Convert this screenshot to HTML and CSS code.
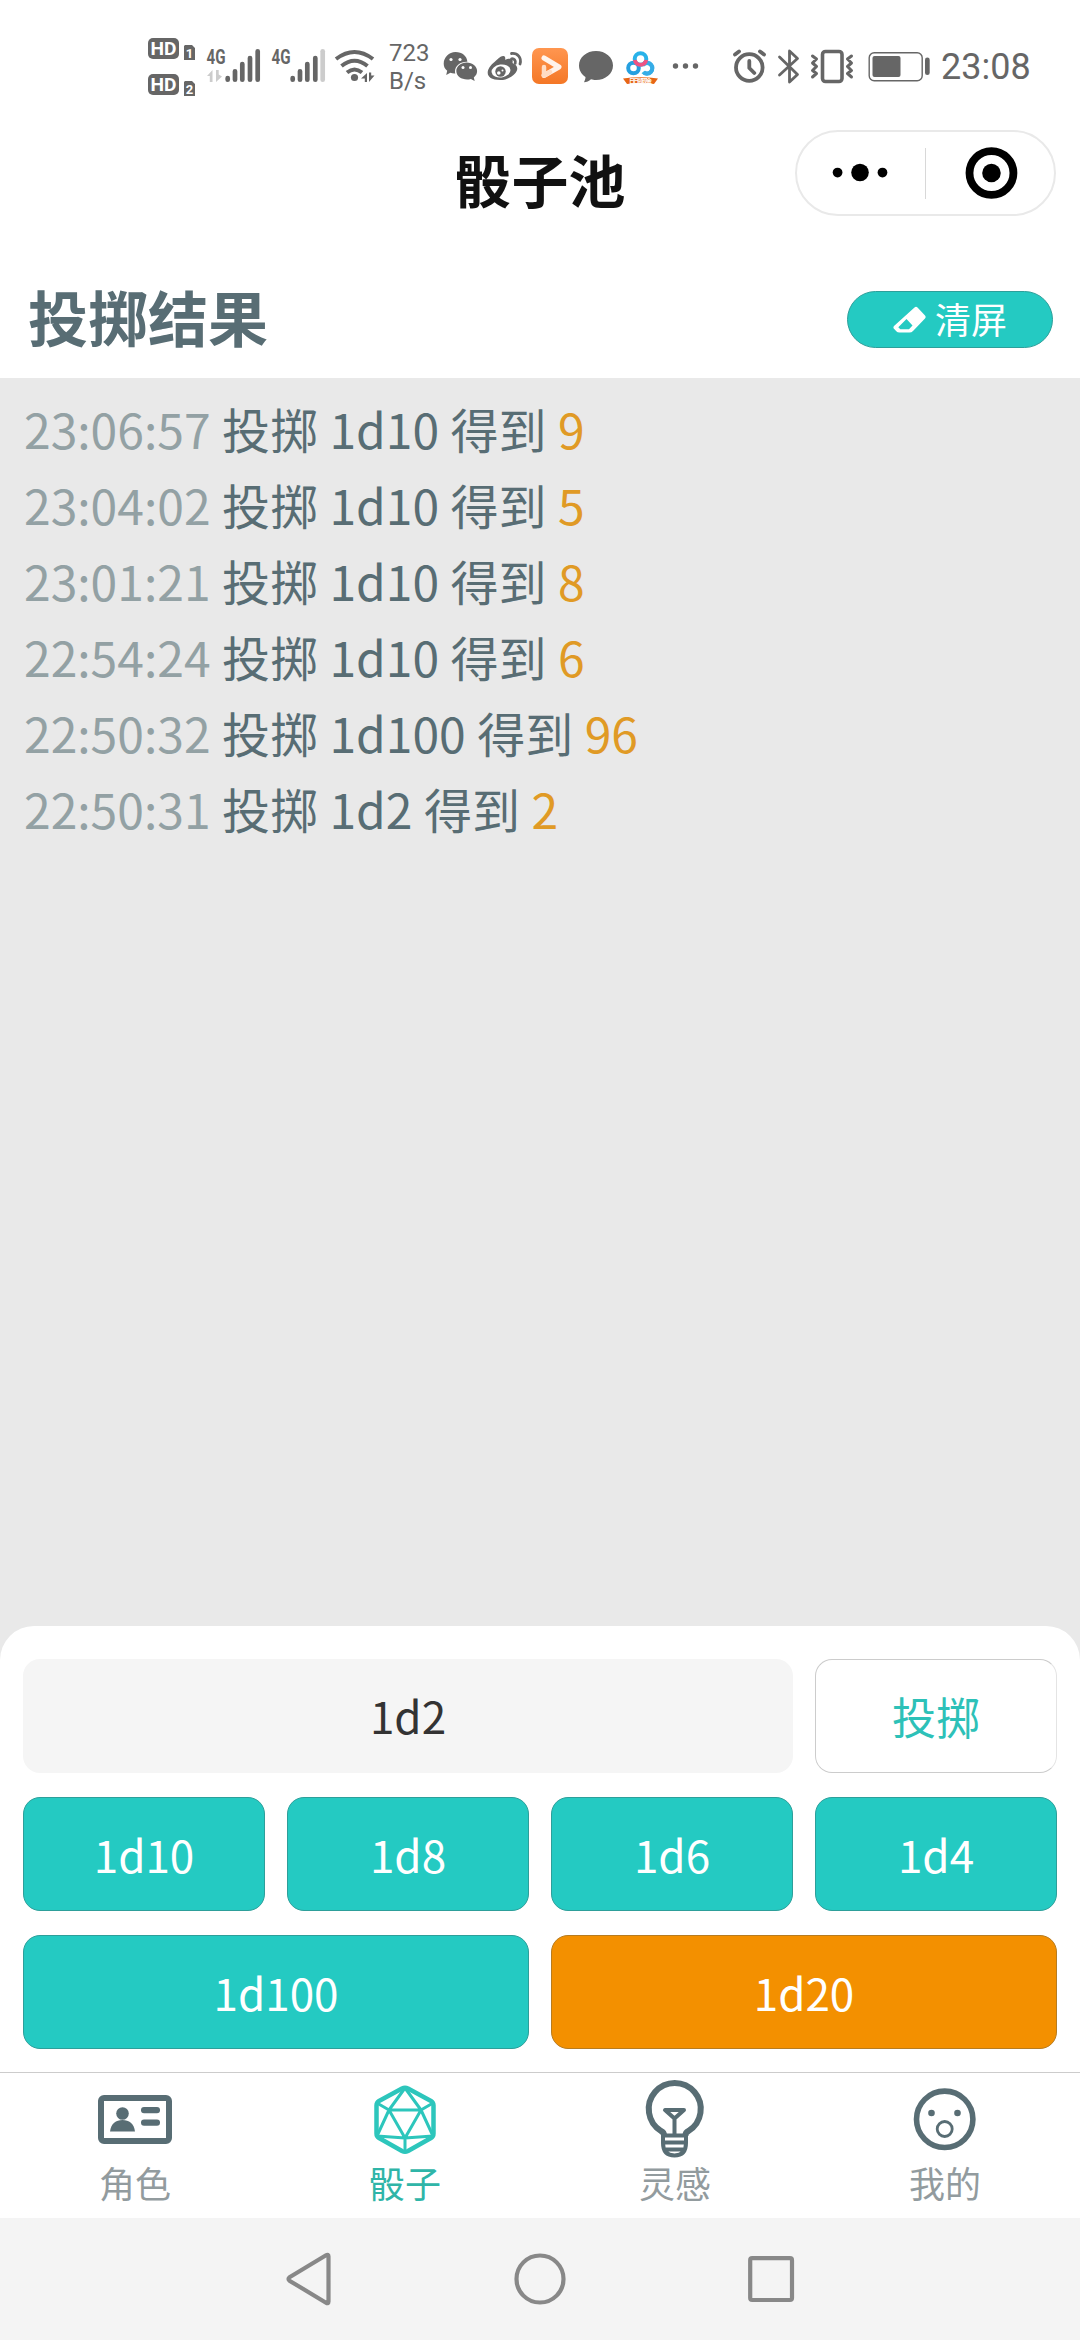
FILE: index.html
```html
<!DOCTYPE html>
<html lang="zh-CN">
<head>
<meta charset="utf-8">
<title>骰子池</title>
<link rel="stylesheet" href="styles.css">
</head>
<body>
<div class="screen">
  <div class="status">
    <svg width="53" height="60" viewBox="148 37 53 60">
      <g fill="#666"><rect x="148" y="38" width="31" height="21" rx="5"/><rect x="148" y="74" width="31" height="21" rx="5"/>
      <path d="M185 45h7l3 3v12h-11V46zM185 81h7l3 3v12h-11V82z"/></g>
      <g class="tiny" fill="#fff" text-anchor="middle"><text x="163.5" y="55" font-size="19" textLength="26" lengthAdjust="spacingAndGlyphs">HD</text><text x="163.5" y="91" font-size="19" textLength="26" lengthAdjust="spacingAndGlyphs">HD</text><text x="189.5" y="57.500" font-size="13">1</text><text x="189.500" y="93.500" font-size="13">2</text></g>
    </svg>
    <svg width="65" height="60" viewBox="201 37 65 60">
      <text class="tiny" x="206.500" y="64" font-size="20" textLength="19" lengthAdjust="spacingAndGlyphs" fill="#666">4G</text>
      <path d="M212.500 70v12h-2.700v-6H207zM216 82V70h2.700v4.500l3.300 2z" fill="#ccc"/>
      <path class="bars" d="M227.700 78v1.700M235 71.300v8.400M242.300 64v15.700M250 58v21.700M257.700 51.300v28.400"/>
    </svg>
    <svg width="64" height="60" viewBox="266 37 64 60">
      <text class="tiny" x="271.500" y="64" font-size="20" textLength="19" lengthAdjust="spacingAndGlyphs" fill="#666">4G</text>
      <path class="bars" d="M292.700 78v1.700M300 71.300v8.400M307.300 64v15.700M315.300 58v21.700"/>
      <path class="bars faint" d="M322.700 51.300v28.400"/>
    </svg>
    <svg width="55" height="60" viewBox="330 37 55 60">
      <g fill="none" stroke="#666" stroke-width="4"><path d="M336 59q18.500-14 37 0M341.500 66q13-10.500 26 0M347 72.500q7.500-6 15 0"/></g>
      <circle cx="354.500" cy="77.500" r="3.600" fill="#666"/>
      <path d="M367 73v9h-2.200v-3.500H361zM369 82v-9.500h2.200v3h3.300z" fill="#666"/>
    </svg>
    <div class="speed"><span>723</span><span>B/s</span></div>
    <svg width="47" height="60" viewBox="436 37 47 60">
      <path fill="#666" d="M455.500 52c6.700 0 11.500 4.200 11.900 9.700-6.700-.3-12.400 4-12.400 9.700 0 .8.100 1.300.3 2-1.800.1-3.200 0-4.900-.6l-4.200 2.200 1-4.200c-2.300-1.900-3.500-4.200-3.500-7.100 0-6.500 5.300-11.700 11.800-11.700z"/>
      <path fill="#666" d="M466.700 62.500c5.700 0 10.400 3.800 10.400 8.600 0 2.800-1.300 4.800-3.300 6.400l.9 3.500-3.800-2c-6.700 2-14.600-1.600-14.600-7.900 0-4.800 4.700-8.600 10.400-8.600z"/>
      <g fill="#fff"><circle cx="451" cy="59.500" r="1.600"/><circle cx="460" cy="59.500" r="1.600"/><circle cx="463" cy="67.500" r="1.500"/><circle cx="470.500" cy="67.500" r="1.500"/></g>
    </svg>
    <svg width="44" height="60" viewBox="483 37 44 60">
      <path fill="#666" d="M499 58c3-2 6-2 5.500 2 6-2.500 9-1 8 3 12 5-1 17-12 17-17 0-15-11-6-18 3-3 6.500-6.500 9-6 2 .4 2 2 1.500 4z"/>
      <ellipse cx="501" cy="71" rx="9.500" ry="6.500" fill="#fff" transform="rotate(-8 501 71)"/>
      <circle cx="500.500" cy="71.500" r="5.200" fill="#666"/><circle cx="498.800" cy="73" r="1.800" fill="#fff"/><circle cx="502.500" cy="70.500" r="1" fill="#fff"/>
      <g fill="none" stroke="#666" stroke-width="2.800" stroke-linecap="round"><path d="M511.500 53.500c6-.8 10.500 4.500 8.500 10.500M511.500 58.800c2.800-.3 4.500 1.700 3.700 4.500"/></g>
    </svg>
    <svg width="47" height="60" viewBox="527 37 47 60">
      <defs><linearGradient id="play" x2="0" y2="1"><stop stop-color="#ff9650"/><stop offset="1" stop-color="#f47726"/></linearGradient></defs>
      <rect x="532" y="48" width="36" height="36" rx="7" fill="url(#play)"/>
      <g fill="none" stroke="#fff" stroke-width="5" stroke-linecap="round" stroke-linejoin="round"><path d="M544 58l15 9-15 8.500" opacity=".9"/><path d="M544 67v8.500l6-3.500" stroke="#ffdcc4" stroke-width="4.500"/></g>
    </svg>
    <svg width="44" height="60" viewBox="574 37 44 60"><path fill="#666" d="M596 51c9.500 0 17 6.300 17 14.500s-7.500 14.500-17 14.500c-2 0-3.500-.2-5-.7-2 2-4.500 2.900-7 2.900.7-1.700 1.500-3.200 1.500-5.200-4-2.800-6.500-6.700-6.500-11.500C579 57.300 586.500 51 596 51z"/></svg>
    <svg width="48" height="60" viewBox="618 37 48 60">
      <g fill="none" stroke-width="4"><circle cx="633.500" cy="68" r="5.300" stroke="#259fdf"/><path d="M643 72a5.300 5.300 0 1 0-.5-6.500" stroke="#36b6e7"/><path d="M644 72.500a5.400 5.400 0 1 0 0-9" stroke="#36ace7"/><circle cx="640.500" cy="59" r="5.800" stroke="#28b2e9"/><path d="M634.800 60a5.800 5.800 0 0 0 11.400 0" stroke="#ee5383"/></g>
      <path d="M623 78.500q17.500-2.500 35 0l-4 5.500q-13.500-2-27 0z" fill="#e76615"/>
      <text class="tiny" x="629" y="82.500" font-size="6" textLength="23" fill="#fff">日日领现金</text>
    </svg>
    <svg width="44" height="60" viewBox="666 37 44 60"><g fill="#666"><circle cx="675.500" cy="66" r="2.700"/><circle cx="685.500" cy="66" r="2.700"/><circle cx="695.500" cy="66" r="2.700"/></g></svg>
    <svg width="62" height="60" viewBox="710 37 62 60"><g fill="none" stroke="#666" stroke-width="3.800" stroke-linecap="round" stroke-linejoin="round"><circle cx="749.300" cy="67.500" r="13.300"/><path d="M749.300 61v7l5 5M735 54.500l4-3M764 54.500l-4-3"/></g></svg>
    <svg width="33" height="60" viewBox="772 37 33 60"><path fill="none" stroke="#666" stroke-width="2.800" stroke-linejoin="round" stroke-linecap="round" d="M779.500 57l18 17.500-8 7.500V51l8 7.500-18 16.500"/></svg>
    <svg width="56" height="60" viewBox="805 37 56 60"><g fill="none" stroke="#666"><rect x="822.500" y="51.500" width="19.500" height="30" rx="3" stroke-width="3.600"/><path stroke-width="3" stroke-linecap="round" stroke-linejoin="round" d="M812.500 56l4 3-4 4 4 3.500-4 4 4 3-4 3.500M851.500 56l-4 3 4 4-4 3.500 4 4-4 3 4 3.500"/></g></svg>
    <svg width="73" height="60" viewBox="861 37 73 60"><rect x="869.200" y="52.700" width="53" height="28" rx="5" fill="none" stroke="#666" stroke-width="1.400"/><rect x="872.500" y="56" width="28" height="21" rx="2" fill="#666"/><rect x="925" y="57.500" width="4.700" height="17.500" rx="2.300" fill="#666"/></svg>
    <div class="clock">23:08</div>
  </div>

  <header class="titlebar">
    <h1 class="title">骰子池</h1>
    <div class="capsule">
      <svg class="half" viewBox="796 131 130 84"><circle cx="837" cy="172.500" r="5"/><circle cx="860" cy="172.500" r="9"/><circle cx="883" cy="172.500" r="5"/></svg>
      <span class="divider"></span>
      <svg class="half" viewBox="927 131 128 84"><circle cx="992.500" cy="173" r="22.500" fill="none" stroke="#000" stroke-width="8"/><circle cx="992.500" cy="173" r="9.500"/></svg>
    </div>
  </header>

  <section class="heading">
    <h2 class="subtitle">投掷结果</h2>
    <button class="btn clear">
      <svg width="34" height="30" viewBox="0 0 34 30"><path fill="#fff" fill-rule="evenodd" d="M21.500 2.500Q23 1 24.500 2.500L32 10.500Q33.300 12 32 13.400L20 26Q18.500 27.500 16.500 27.500H6.500Q4.500 27.500 3.300 26.200L1 23.800Q-.2 22.500 1 21zM13.500 14L5.300 22.300 7.300 24.300H16L19.500 20.500z"/></svg>
      <span>清屏</span>
    </button>
  </section>

  <main class="log">
    <p class="entry"><time>23:06:57</time> 投掷 1d10 得到 <b>9</b></p>
    <p class="entry"><time>23:04:02</time> 投掷 1d10 得到 <b>5</b></p>
    <p class="entry"><time>23:01:21</time> 投掷 1d10 得到 <b>8</b></p>
    <p class="entry"><time>22:54:24</time> 投掷 1d10 得到 <b>6</b></p>
    <p class="entry"><time>22:50:32</time> 投掷 1d100 得到 <b>96</b></p>
    <p class="entry"><time>22:50:31</time> 投掷 1d2 得到 <b>2</b></p>
  </main>

  <section class="panel">
    <div class="formula">1d2</div>
    <button class="btn roll">投掷</button>
    <button class="btn">1d10</button>
    <button class="btn">1d8</button>
    <button class="btn">1d6</button>
    <button class="btn">1d4</button>
    <button class="btn wide">1d100</button>
    <button class="btn wide orange">1d20</button>
  </section>

  <nav class="tabs">
    <div class="tab">
      <svg width="80" height="84" viewBox="95 2078 80 84"><rect x="101" y="2098" width="68" height="43" rx="3" fill="none" stroke="#586d74" stroke-width="6"/><g fill="#586d74"><circle cx="122.500" cy="2113.500" r="6.300"/><path d="M110 2131.500c1-8 6-11.500 12.500-11.500s11.500 3.500 12.500 11.500z"/><rect x="141" y="2107" width="19" height="6.300" rx="3"/><rect x="141" y="2119.500" width="19" height="6.300" rx="3"/></g></svg>
      <span>角色</span>
    </div>
    <div class="tab active">
      <svg width="80" height="84" viewBox="365 2078 80 84"><g fill="none" stroke="#2dc6bc" stroke-linejoin="round"><path stroke-width="4.500" d="M402 2088.500q3-1.500 6 0l23 12.500q2.500 1.500 2.500 4.500v28q0 3-2.500 4.500l-23 13q-3 1.500-6 0l-23-13q-2.500-1.500-2.500-4.500v-28q0-3 2.500-4.500z"/><path stroke-width="3" d="M405 2088l-16 22h32zM389 2110l16 28 16-28M377 2103l12 7-12 26 28 2 28-2-12-26 12-7M405 2138v13"/></g></svg>
      <span>骰子</span>
    </div>
    <div class="tab">
      <svg width="80" height="84" viewBox="635 2078 80 84"><g fill="none" stroke="#586d74" stroke-linejoin="round"><path stroke-width="6" d="M664 2136v-1q0-2.500-3-4a26 26 0 1 1 27.500 0q-3 1.500-3 4v1"/><path stroke-width="4" d="M663 2134v9q0 12.500 11.500 12.500t11.500-12.500v-9M664 2135.500h21M664 2142.500h21M664 2149.500h21"/><path stroke-width="4" d="M665 2110h19l-9.500 8.500zM674.500 2118.500V2135"/></g></svg>
      <span>灵感</span>
    </div>
    <div class="tab">
      <svg width="80" height="84" viewBox="905 2078 80 84"><g fill="none" stroke="#586d74"><circle cx="944.700" cy="2119.300" r="28.200" stroke-width="5.600"/><circle cx="944.700" cy="2129" r="7.500" stroke-width="2.800"/></g><g fill="#586d74"><circle cx="931.500" cy="2113" r="3.300"/><circle cx="957.500" cy="2113" r="3.300"/></g></svg>
      <span>我的</span>
    </div>
  </nav>

  <div class="sysnav">
    <svg width="50" height="58" viewBox="284 2250 50 58"><path d="M289.500 2277.300l36.500-22q2.500-1.500 2.500 1.200v45q0 2.700-2.500 1.200l-36.500-22q-2-1.700 0-3.400z"/></svg>
    <svg width="58" height="58" viewBox="511 2250 58 58"><circle cx="540" cy="2279" r="23.500"/></svg>
    <svg width="50" height="58" viewBox="744 2250 50 58"><rect x="748.200" y="2258.200" width="41.800" height="41.800" rx="2"/></svg>
  </div>
</div>
</body>
</html>
```
FILE: styles.css
```css
* { box-sizing: border-box; }
body { margin: 0; background: #fff; font-family: "Noto Sans CJK SC", sans-serif; }
svg { display: block; flex: none; }
h1, h2, p { margin: 0; }
button { font: inherit; padding: 0; }

.screen { width: 1080px; height: 2340px; display: flex; flex-direction: column; overflow: hidden; background: #e9e9e9; }

.status { height: 122px; padding: 37px 0 0 148px; display: flex; align-items: flex-start; flex: none; background: #fff; color: #666; font-family: Roboto, sans-serif; }
.tiny { font-family: Roboto, "Noto Sans CJK SC", sans-serif; font-weight: 700; }
.bars { fill: none; stroke: #666; stroke-width: 4.700px; stroke-linecap: round; }
.faint { stroke: #ccc; }
.speed { width: 51px; padding: 2px 0 0 4px; display: flex; flex-direction: column; font-size: 24px; line-height: 28px; }
.clock { font-size: 36px; line-height: 61px; padding-left: 7px; }

.titlebar { height: 134px; flex: none; display: grid; grid-template-columns: 1fr auto 1fr; padding: 8px 24px 0; background: #fff; }
.title { grid-column: 2; font-size: 57px; line-height: 97px; font-weight: 700; color: #111; }
.capsule { justify-self: end; width: 261px; height: 86px; border: 2px solid #e9e9e9; border-radius: 43px; display: flex; align-items: center; }
.half { width: 128px; height: 82px; }
.divider { width: 1px; height: 51px; background: #d8d8d8; }

.heading { height: 122px; flex: none; display: flex; justify-content: space-between; align-items: center; padding: 5px 27px 0 28px; background: #fff; }
.subtitle { font-size: 60px; line-height: 80px; padding-bottom: 7px; font-weight: 700; color: #586d74; }

.btn { display: flex; align-items: center; justify-content: center; border: 1px solid #2d9f9a; border-radius: 17px; background: #24cac2; color: #fff; font-size: 44px; line-height: 60px; }
.clear { width: 206px; height: 57px; border-radius: 29px; font-size: 36px; line-height: 50px; gap: 8px; }
.clear span { padding-bottom: 3px; }

.log { flex: 1; padding: 12px 24px 0; }
.entry { height: 76px; line-height: 76px; font-size: 48px; word-spacing: 0.7px; color: #586d74; white-space: nowrap; }
.entry time { color: #93a1a4; }
.entry b { font-weight: 400; color: #e09a25; }

.panel { flex: none; height: 446px; background: #fff; border-radius: 34px 34px 0 0; padding: 33px 23px 0; display: grid; grid-template-columns: repeat(4, 1fr); grid-auto-rows: 114px; gap: 24px 22px; }
.formula { grid-column: span 3; border-radius: 17px; background: #f5f5f5; color: #333; font-size: 44px; line-height: 60px; padding-bottom: 2px; display: flex; align-items: center; justify-content: center; }
.roll { background: #fff; color: #2dc1b8; border-color: #ccc #e4e4e4 #ccc #ccc; }
.wide { grid-column: span 2; }
.orange { background: #f39000; border-color: #b77c20; }

.tabs { flex: none; height: 146px; border-top: 1px solid #ccc; background: #fff; display: grid; grid-template-columns: repeat(4, 1fr); }
.tab { display: flex; flex-direction: column; align-items: center; padding-top: 5px; font-size: 36px; line-height: 41px; color: #929b9e; }
.active { color: #2fb5a8; }

.sysnav { flex: none; height: 122px; background: #f4f4f4; display: flex; justify-content: center; align-items: center; gap: 177px; }
.sysnav svg { fill: none; stroke: #888; stroke-width: 4.200px; }
```
